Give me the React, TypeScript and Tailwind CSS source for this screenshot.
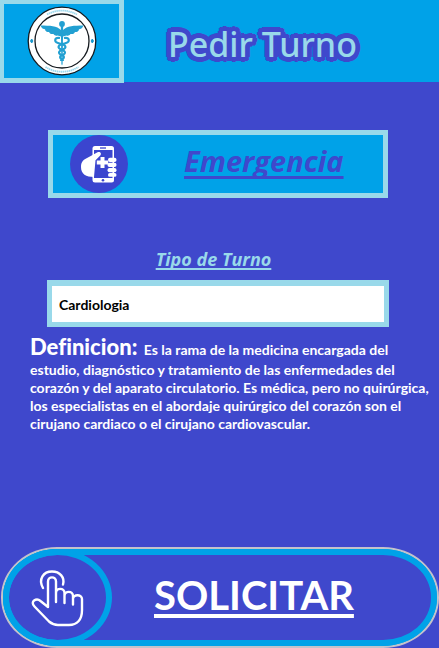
import { useState } from "react";

function MedicalSeal() {
  return (
    <svg viewBox="0 0 70 70" className="h-[70px] w-[70px]" role="img" aria-label="Logo">
      <circle cx="35" cy="35" r="33.8" fill="#fff" stroke="#151a1f" strokeWidth="1.3" />
      <circle cx="35" cy="35" r="27" fill="#fff" stroke="#151a1f" strokeWidth="1.3" />
      <g fill="none" stroke="#9bd8ee" strokeWidth="1.8">
        <path d="M20 8.500a31 31 0 0 1 30 0" strokeDasharray="1.5 .5" />
        <path d="M18.500 61a31 31 0 0 0 33 0" strokeDasharray="1.500 .5" />
      </g>
      <path d="M3.500 35l1.200-2 1.200 2-1.200 2zM64.100 35l1.200-2 1.200 2-1.200 2z" fill="#1696cc" stroke="#1696cc" />
      <g fill="#22a0d2">
        <circle cx="35" cy="18" r="2.900" />
        <path d="M33.800 19h2.400l-.6 39-.6 1.500-.6-1.500z" />
        <path d="M34 24c-4-4-11-4.500-20.500-4.500 1 3 3 3.500 4.500 3.700 0 2 2 2.800 4 2.800 1 2 2.500 2.200 4.500 2 1 2 3 1.800 4 1.500l3.500 1zM36 24c4-4 11-4.500 20.500-4.500-1 3-3 3.500-4.500 3.700 0 2-2 2.800-4 2.800-1 2-2.500 2.200-4.500 2-1 2-3 1.800-4 1.500l-3.500 1z" />
      </g>
      <g fill="none" stroke="#22a0d2" strokeWidth="2.100">
        <path d="M33 32c-6-1-6 4-2 5 4 1.500 7.500 1 7.500 4s-6.500 2.500-6.500 5.500 5 2 5 4.500-3 2-3 4" />
        <path d="M37 32c6-1 6 4 2 5-4 1.500-7.500 1-7.500 4s6.500 2.500 6.500 5.500-5 2-5 4.500 3 2 3 4" />
      </g>
    </svg>
  );
}

function PhoneInHand() {
  return (
    <svg viewBox="0 0 58 58" className="h-[58px] w-[58px] shrink-0" aria-hidden="true">
      <circle cx="29" cy="29" r="29" fill="#3b45cf" />
      <rect x="22.500" y="11" width="21.500" height="36.500" rx="2.500" fill="#fff" />
      <rect x="24" y="15" width="18.500" height="28" fill="#3b45cf" />
      <path d="M30 13h6" stroke="#3b45cf" strokeWidth="1.300" />
      <circle cx="33" cy="45.200" r="1.300" fill="#3b45cf" />
      <path d="M24 42c-8 0-13-3-13-10 0-6 3-7.500 7-9.500l9.500-5.200c3-1.500 4.500 1.500 2.500 3.400l-4.500 4.600z" fill="#fff" />
      <path d="M30.500 22h4v3.500h3.700v4h-3.700V33h-4v-3.500h-3.700v-4h3.700z" fill="#fff" />
      <g fill="#fff">
        <rect x="38" y="22.700" width="8.500" height="4.300" rx="2" />
        <rect x="37.500" y="27.800" width="9" height="4.300" rx="2" />
        <rect x="37.500" y="32.900" width="9" height="4.300" rx="2" />
        <rect x="38" y="38" width="8.500" height="3.800" rx="1.900" />
      </g>
    </svg>
  );
}

function TapHand() {
  return (
    <svg viewBox="0 0 54 58" className="h-[58px] w-[54px]" fill="none" stroke="#fff" strokeWidth="2.400" strokeLinecap="round" strokeLinejoin="round" aria-hidden="true">
      <path d="M12 19C7 10 12.500 2.500 21 2.500c8 0 13 6 11 13" />
      <path d="M17 38V12.500c0-5.500 8-5.500 8 0V33M25 24c0-5.500 8.500-5.500 8.500 0v10M33.500 27c0-5.500 8.500-5.500 8.500 0v8.500M42 30c0-5 9-5 9 0v11c0 10-5 15-13 15H27c-4 0-6-1-9-3.500L3.500 37.500c-5-5 2-9 6-5.500L17 38" />
    </svg>
  );
}

export default function App() {
  const [specialty, setSpecialty] = useState("Cardiologia");
  return (
    <div className="flex min-h-screen flex-col bg-[#3f48cc] font-['Lato',sans-serif]">
      <header className="flex h-[82px] items-start bg-[#00a2e8]">
        <div className="flex h-[83px] w-[124px] shrink-0 items-center justify-center border-4 border-r-[5px] border-b-[5px] border-[#99d9ea]">
          <MedicalSeal />
        </div>
        <h1 className="ml-11 pt-5 font-['Noto_Sans',sans-serif] text-[34px] leading-[48px] font-medium whitespace-nowrap text-[#99d9ea] [text-shadow:5px_0_#3f48cc,-5px_0_#3f48cc,0_5px_#3f48cc,0_-5px_#3f48cc,4px_3px_#3f48cc,4px_-3px_#3f48cc,-4px_3px_#3f48cc,-4px_-3px_#3f48cc,3px_4px_#3f48cc,3px_-4px_#3f48cc,-3px_4px_#3f48cc,-3px_-4px_#3f48cc,2px_0_#3f48cc,-2px_0_#3f48cc,0_2px_#3f48cc,0_-2px_#3f48cc]">
          Pedir Turno
        </h1>
      </header>

      <main className="flex flex-1 flex-col pt-12">
        <button type="button" className="mr-[51px] ml-12 flex h-[68px] items-center border-[5px] border-[#99d9ea] bg-[#00a2e8] pl-[17px]">
          <PhoneInHand />
          <span className="ml-14 pb-1.5 font-['Open_Sans',sans-serif] text-[29px] leading-9 font-bold text-[#3f48cc] italic underline decoration-[3px] underline-offset-4 [text-decoration-skip-ink:none]">
            Emergencia
          </span>
        </button>

        <label htmlFor="specialty" className="mt-12 self-center pr-3 font-['Open_Sans',sans-serif] text-[18px] leading-[26px] font-bold text-[#99d9ea] italic underline decoration-2 underline-offset-2 [text-decoration-skip-ink:none]">
          Tipo de Turno
        </label>
        <select
          id="specialty"
          value={specialty}
          onChange={(e) => setSpecialty(e.target.value)}
          className="mt-2 mr-[50px] ml-[47px] h-[47px] appearance-none border-[5px] border-t-[6px] border-[#99d9ea] bg-white px-[7px] pt-0.5 text-sm font-bold text-black"
        >
          <option>Cardiologia</option>
        </select>

        <p className="mt-1.5 mr-2 ml-[30px] text-sm leading-[18px] font-bold text-white [font-variant-ligatures:none]">
          <strong className="mr-[3px] text-[22px] leading-7">Definicion:</strong> Es la rama de la medicina encargada del estudio, diagnóstico y tratamiento de las enfermedades del corazón y del aparato circulatorio. Es médica, pero no quirúrgica, los especialistas en el abordaje quirúrgico del corazón son el cirujano cardiaco o el cirujano cardiovascular.
        </p>

        <button type="button" className="mt-auto ml-px flex h-[101px] rounded-[56px/50px] border-2 border-[#c3c3cb] bg-[#00a2e8] text-white">
          <span className="flex h-full w-full rounded-[54px/48px] border-[6px] border-[#00a2e8] bg-[#3f48cc]">
            <span className="-my-[6px] -ml-[6px] flex w-[109px] shrink-0 items-center justify-center rounded-[50%] border-[6px] border-[#00a2e8]">
              <TapHand />
            </span>
            <span className="flex flex-1 items-center pb-1.5 pl-[42px] text-[40px] leading-[48px] font-bold underline decoration-4 underline-offset-4">
              SOLICITAR
            </span>
          </span>
        </button>
      </main>
    </div>
  );
}
